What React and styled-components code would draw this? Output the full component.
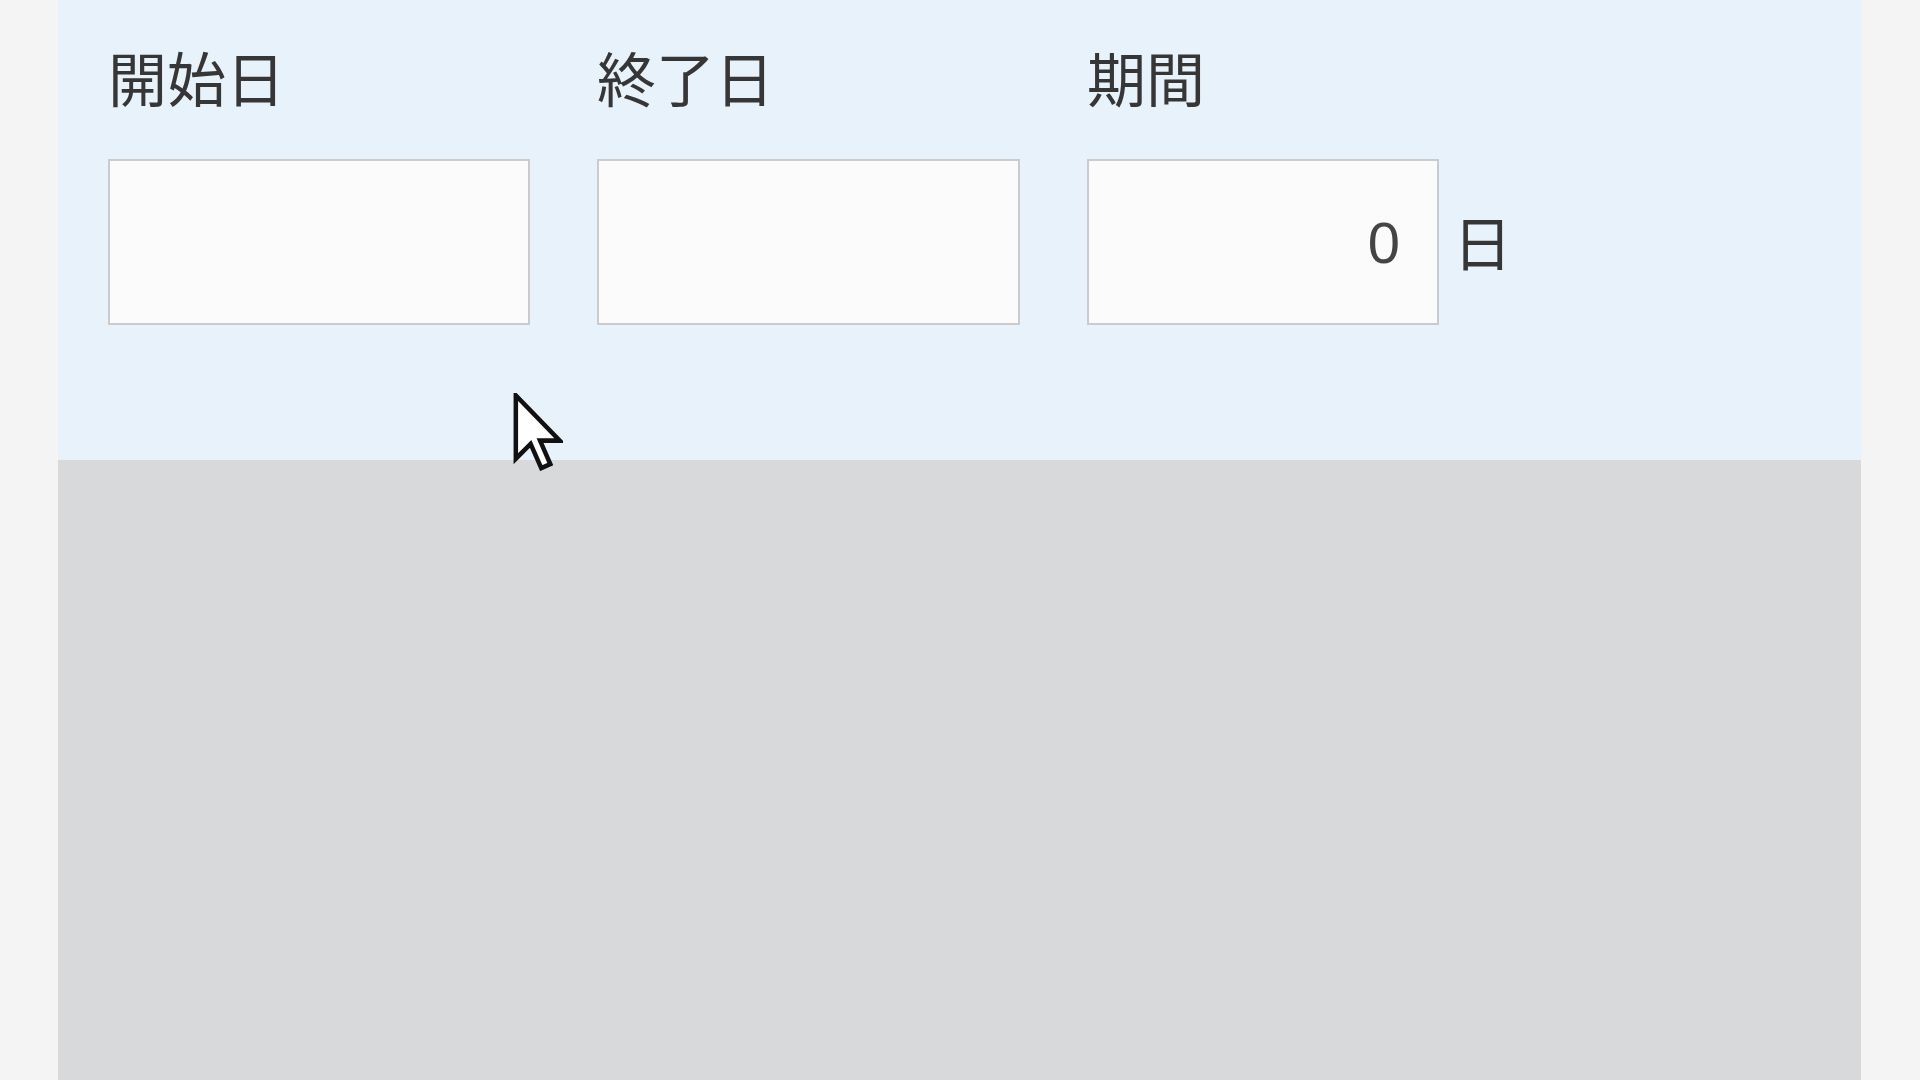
import React from 'react';
import styled, { createGlobalStyle } from 'styled-components';

const GlobalStyle = createGlobalStyle`
  html, body {
    margin: 0;
    padding: 0;
    background: #f4f4f4;
  }
  body {
    font-family: "Noto Sans CJK JP", "Noto Sans", sans-serif;
  }
`;

const Page = styled.div`
  position: relative;
  height: 1080px;
  padding-left: 58px;
  overflow: hidden;
`;

const Panel = styled.div`
  width: 1803px;
  height: 100%;
  display: flex;
  flex-direction: column;
  background: #d7d9da;
`;

const FormArea = styled.div`
  height: 460px;
  box-sizing: border-box;
  background: #e8f2fa;
  padding: 47px 0 0 50px;
  display: flex;
  gap: 67px;
`;

const Field = styled.div`
  display: flex;
  flex-direction: column;
  gap: 53px;
`;

const Label = styled.div`
  font-size: 59px;
  line-height: 1;
  color: #363636;
`;

const InputRow = styled.div`
  display: flex;
  align-items: center;
  gap: 14px;
`;

const Input = styled.input`
  width: ${(p) => p.$w}px;
  height: 166px;
  box-sizing: border-box;
  border: 2px solid #c9cbcd;
  background: #fbfbfb;
  padding: 0 37px 0 16px;
  font-family: "Liberation Sans", Arial, sans-serif;
  font-size: 58px;
  color: #444;
  text-align: ${(p) => (p.$right ? 'right' : 'left')};
  outline: none;
  margin: 0;
`;

const Unit = styled.span`
  font-size: 59px;
  line-height: 1;
  color: #363636;
  margin-top: -4px;
`;

const Cursor = styled.svg`
  position: absolute;
  left: 513px;
  top: 393px;
  width: 50px;
  height: 78px;
`;

export default function App() {
  return (
    <>
      <GlobalStyle />
      <Page>
        <Panel>
          <FormArea>
            <Field>
              <Label>開始日</Label>
              <Input $w={422} defaultValue="" />
            </Field>
            <Field>
              <Label>終了日</Label>
              <Input $w={423} defaultValue="" />
            </Field>
            <Field>
              <Label>期間</Label>
              <InputRow>
                <Input $w={352} $right defaultValue="0" />
                <Unit>日</Unit>
              </InputRow>
            </Field>
          </FormArea>
        </Panel>
        <Cursor viewBox="0 0 12 19">
          <path
            d="M0.6 0.6 L0.6 16 L4.2 12.4 L6.8 18.3 L9 17.3 L6.5 11.6 L11.3 11.6 Z"
            fill="#fff"
            stroke="#111"
            strokeWidth="1.1"
            strokeLinejoin="miter"
          />
        </Cursor>
      </Page>
    </>
  );
}
